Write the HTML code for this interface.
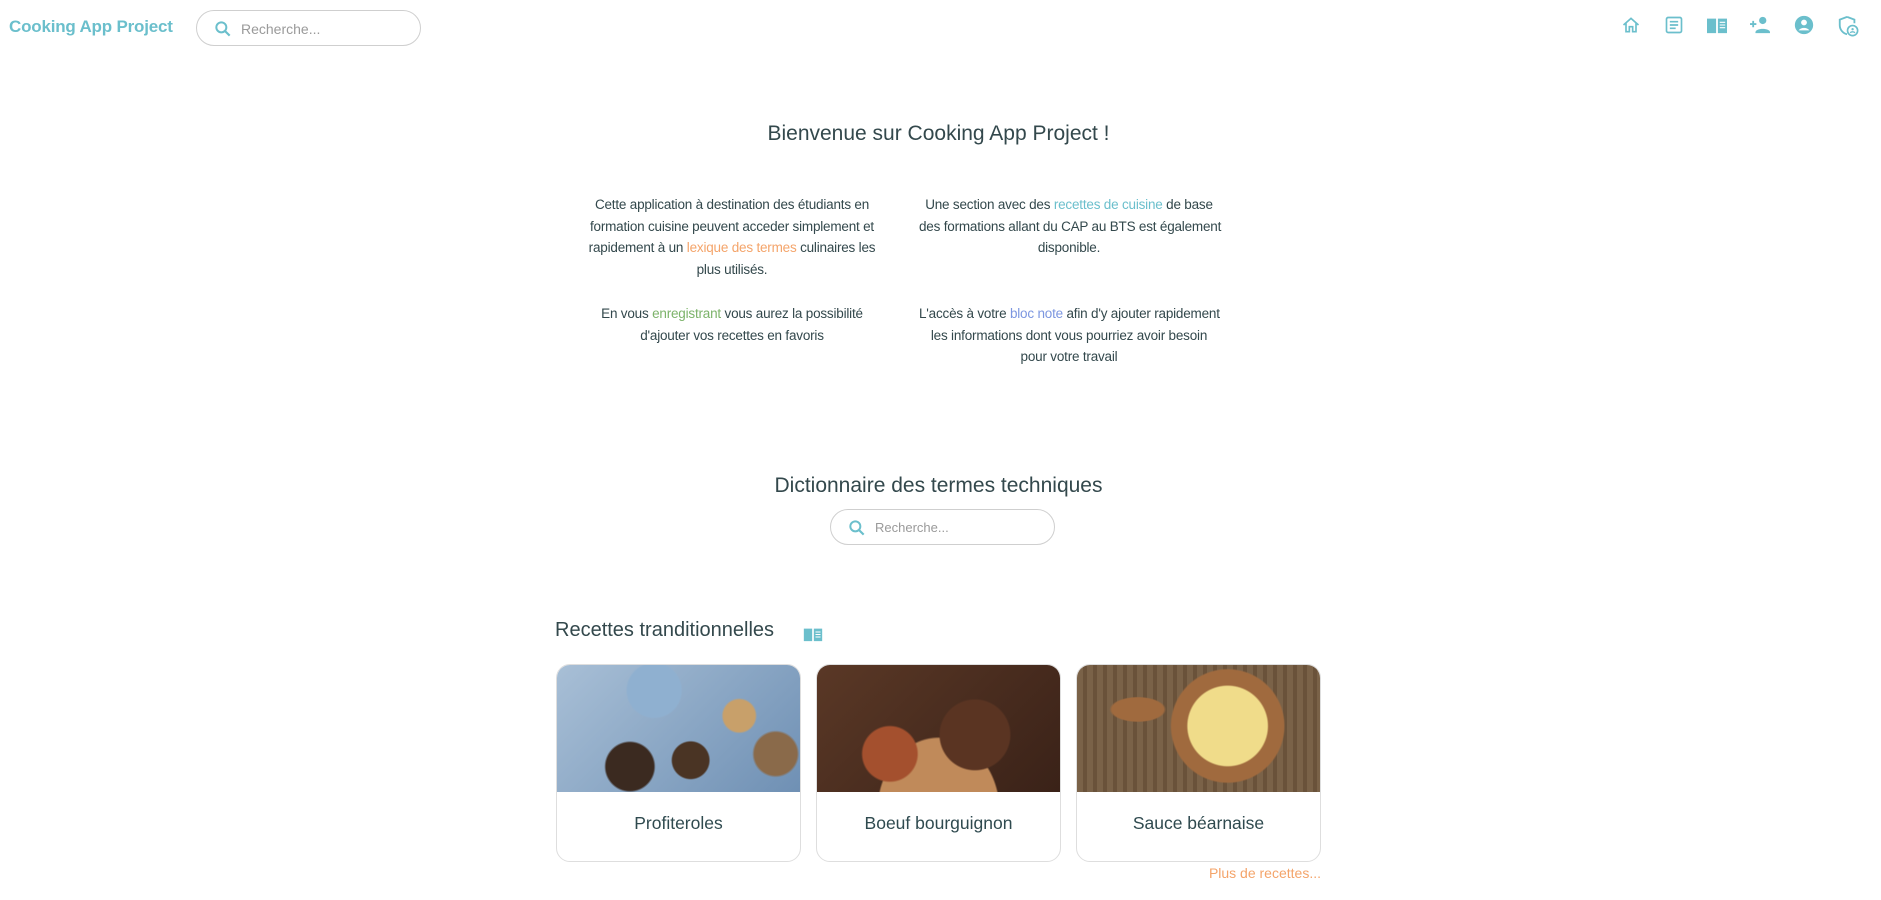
<!DOCTYPE html>
<html><head><meta charset="utf-8"><style>
*{margin:0;padding:0;box-sizing:border-box}
body{width:1881px;height:900px;background:#fff;font-family:"Liberation Sans",sans-serif;color:#2f4a4f;position:relative;overflow:hidden}
.abs{position:absolute}
.logo{left:9px;top:17px;font-size:17px;color:#6bbfcc;font-weight:bold;letter-spacing:-0.2px}
.search{border:1px solid #cfcfcf;border-radius:20px;background:#fff}
.search svg{position:absolute;left:16px;top:8px}
.search span{position:absolute;left:44px;top:10px;font-size:14px;color:#9a9a9a}
.icon{position:absolute;top:15px}
.ctr{text-align:center;white-space:nowrap}
.p{font-size:13.5px;line-height:21.6px;color:#33484c;letter-spacing:-0.2px}
.card{position:absolute;top:664px;width:245px;height:198px;border:1px solid #dedede;border-radius:14px;overflow:hidden;background:#fff}
.card .img{height:127px}
.card .t{text-align:center;font-size:17.5px;margin-top:21px;color:#2f4a4f}
</style></head><body>
<div class="abs logo">Cooking App Project</div>
<div class="abs search" style="left:196px;top:10px;width:225px;height:36px">
<svg width="20" height="20" viewBox="0 0 24 24"><circle cx="10" cy="10" r="6" fill="none" stroke="#6bbfcc" stroke-width="2.4"/><path d="M14.5 14.5L20 20" stroke="#6bbfcc" stroke-width="2.6"/></svg><span>Recherche...</span></div>

<svg class="icon" style="left:1621px" width="20" height="20" viewBox="0 0 24 24"><path d="M3 12L12 4l9 8M6 10v10h4v-6h4v6h4V10" fill="none" stroke="#6bbfcc" stroke-width="2"/></svg>
<svg class="icon" style="left:1664px" width="20" height="20" viewBox="0 0 24 24"><rect x="3" y="3" width="18" height="18" rx="2" fill="none" stroke="#6bbfcc" stroke-width="2"/><path d="M7 8h10M7 12h10M7 16h7" stroke="#6bbfcc" stroke-width="2"/></svg>
<svg class="icon" style="left:1706px" width="22" height="20" viewBox="0 0 24 22"><path d="M1 4h10v16H1zM13 4h10v16H13z" fill="#6bbfcc"/><path d="M15 8h6M15 11h6M15 14h6" stroke="#fff" stroke-width="1.2"/></svg>
<svg class="icon" style="left:1749px" width="22" height="20" viewBox="0 0 24 22"><circle cx="15" cy="6" r="4" fill="#6bbfcc"/><path d="M7 19c0-5 16-5 16 0v1H7z" fill="#6bbfcc"/><path d="M1 10h7M4.5 6.5v7" stroke="#6bbfcc" stroke-width="2"/></svg>
<svg class="icon" style="left:1794px" width="20" height="20" viewBox="0 0 24 24"><circle cx="12" cy="12" r="11" fill="#6bbfcc"/><circle cx="12" cy="9" r="3.5" fill="#fff"/><path d="M5.5 18.5c3-4 10-4 13 0" fill="#fff"/></svg>
<svg class="icon" style="left:1837px" width="22" height="22" viewBox="0 0 24 24"><path d="M11 2L3 5v6c0 5 3.5 9 8 10" fill="none" stroke="#6bbfcc" stroke-width="2"/><path d="M11 2l8 3v4" fill="none" stroke="#6bbfcc" stroke-width="2"/><circle cx="17" cy="17" r="5.5" fill="none" stroke="#6bbfcc" stroke-width="1.8"/><circle cx="17" cy="15.5" r="1.3" fill="#6bbfcc"/><path d="M14.5 19.5c1-1.5 4-1.5 5 0" stroke="#6bbfcc" stroke-width="1.5" fill="none"/></svg>

<div class="abs ctr" style="left:0;width:1877px;top:122px;font-size:21px;color:#33484c">Bienvenue sur Cooking App Project !</div>

<div class="abs ctr p" style="left:582px;width:300px;top:194px">Cette application à destination des étudiants en<br>formation cuisine peuvent acceder simplement et<br>rapidement à un <span style="color:#f4a46a">lexique des termes</span> culinaires les<br>plus utilisés.</div>
<div class="abs ctr p" style="left:919px;width:300px;top:194px">Une section avec des <span style="color:#6bbfcc">recettes de cuisine</span> de base<br>des formations allant du CAP au BTS est également<br>disponible.</div>
<div class="abs ctr p" style="left:582px;width:300px;top:303px">En vous <span style="color:#7cb36a">enregistrant</span> vous aurez la possibilité<br>d'ajouter vos recettes en favoris</div>
<div class="abs ctr p" style="left:919px;width:300px;top:303px">L'accès à votre <span style="color:#7c96e0">bloc note</span> afin d'y ajouter rapidement<br>les informations dont vous pourriez avoir besoin<br>pour votre travail</div>

<div class="abs ctr" style="left:0;width:1877px;top:474px;font-size:21px;color:#33484c">Dictionnaire des termes techniques</div>
<div class="abs search" style="left:830px;top:509px;width:225px;height:36px">
<svg width="20" height="20" viewBox="0 0 24 24"><circle cx="10" cy="10" r="6" fill="none" stroke="#6bbfcc" stroke-width="2.4"/><path d="M14.5 14.5L20 20" stroke="#6bbfcc" stroke-width="2.6"/></svg><span style="font-size:13px">Recherche...</span></div>

<div class="abs" style="left:555px;top:619px;font-size:20px;color:#33484c">Recettes tranditionnelles</div>
<svg class="abs" style="left:803px;top:626px" width="20" height="17" viewBox="0 0 24 20"><path d="M1 3h10v15H1zM13 3h10v15H13z" fill="#6bbfcc"/><path d="M15 7h6M15 10h6M15 13h6" stroke="#fff" stroke-width="1.2"/></svg>

<div class="card" style="left:556px"><div class="img" style="background:radial-gradient(circle at 30% 80%,#3b2a20 0 12%,transparent 13%),radial-gradient(circle at 55% 75%,#4a3424 0 11%,transparent 12%),radial-gradient(circle at 75% 40%,#c8a06a 0 8%,transparent 9%),radial-gradient(circle at 90% 70%,#8a6a4a 0 9%,transparent 10%),radial-gradient(circle at 40% 20%,#8fb0d0 0 15%,transparent 16%),linear-gradient(135deg,#a8bfd6,#6f90b4)"></div><div class="t">Profiteroles</div></div>
<div class="card" style="left:816px"><div class="img" style="background:radial-gradient(circle at 30% 70%,#a4502e 0 14%,transparent 15%),radial-gradient(circle at 65% 55%,#5a3422 0 20%,transparent 21%),radial-gradient(ellipse at 50% 115%,#c08a5a 0 35%,transparent 36%),linear-gradient(135deg,#5a3826,#3a2218)"></div><div class="t">Boeuf bourguignon</div></div>
<div class="card" style="left:1076px"><div class="img" style="background:radial-gradient(circle at 62% 48%,#f0dc8a 0 24%,#a06a3e 25% 34%,transparent 35%),radial-gradient(ellipse at 25% 35%,#a06a3e 0 10%,transparent 11%),repeating-linear-gradient(90deg,#7a6248 0 6px,#6a523a 6px 10px)"></div><div class="t">Sauce béarnaise</div></div>

<div class="abs" style="right:560px;top:865px;font-size:14px;color:#f4a46a">Plus de recettes...</div>
</body></html>
